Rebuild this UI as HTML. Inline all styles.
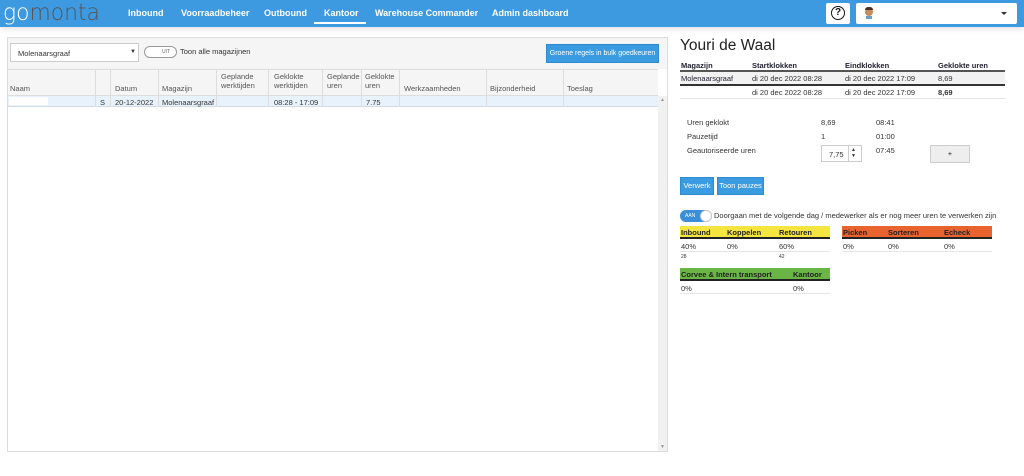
<!DOCTYPE html>
<html><head><meta charset="utf-8"><style>
*{box-sizing:border-box;margin:0;padding:0}
body{width:1024px;height:476px;overflow:hidden;background:#fff;font-family:"Liberation Sans",Arial,sans-serif;font-size:7.5px;color:#333;position:relative}
.a{position:absolute;white-space:nowrap}
.nav{left:0;top:0;width:1024px;height:27px;background:#3d9ae0;box-shadow:0 2px 6px rgba(0,0,0,.12)}
.nav .l{color:#fff;font-weight:bold;font-size:9px;top:8px}
.btn{background:#3a9be0;color:#fff;border:1px solid #2f8bd0}
.hd{font-size:7.5px;color:#555}
.vl{width:1px;background:#ddd;top:69px;height:38px}
</style></head><body>
<div class="a nav">
 <div class="a" style="left:3px;top:0px;font-size:23px;letter-spacing:0px;color:#fff;font-family:'DejaVu Sans',sans-serif;font-weight:200;transform:scaleX(0.95);transform-origin:left">go<span style="color:#555">monta</span></div>
 <div class="a l" style="left:128px">Inbound</div>
 <div class="a l" style="left:181px">Voorraadbeheer</div>
 <div class="a l" style="left:264px">Outbound</div>
 <div class="a l" style="left:324px">Kantoor</div>
 <div class="a" style="left:314px;top:22px;width:52px;height:2px;background:#fff"></div>
 <div class="a l" style="left:375px">Warehouse Commander</div>
 <div class="a l" style="left:492px">Admin dashboard</div>
 <div class="a" style="left:826px;top:3px;width:24px;height:21px;background:#fff;border-radius:2px"><div class="a" style="left:5px;top:3px;width:14px;height:14px;border:1.5px solid #111;border-radius:50%;font-size:10px;font-weight:bold;text-align:center;line-height:11px;color:#111">?</div></div>
 <div class="a" style="left:856px;top:3px;width:161px;height:21px;background:#fff;border-radius:2px">
  <div class="a" style="left:9px;top:5px;width:8px;height:8px;border-radius:50%;background:#c58b5c"></div>
  <div class="a" style="left:9px;top:4px;width:8px;height:3px;border-radius:4px 4px 0 0;background:#4a2f1e"></div>
  <div class="a" style="left:10px;top:13px;width:6px;height:3px;background:#6aa0c8"></div>
  <div class="a" style="left:145px;top:9px;width:0;height:0;border:3px solid transparent;border-top:3px solid #333"></div>
 </div>
</div>
<!-- left panel -->
<div class="a" style="left:7px;top:37px;width:661px;height:415px;border:1px solid #ddd;background:#fff"></div>
<div class="a" style="left:8px;top:38px;width:659px;height:31px;background:#f5f5f5"></div>
<div class="a" style="left:10px;top:43px;width:129px;height:19px;background:#fff;border:1px solid #ccc"><span class="a" style="left:7px;top:5px">Molenaarsgraaf</span><span class="a" style="left:119px;top:5px;font-size:6px">▼</span></div>
<div class="a" style="left:144px;top:46px;width:33px;height:12px;border:1px solid #999;border-radius:7px;background:#fff"><span class="a" style="left:17px;top:2px;font-size:5px;color:#666">UIT</span></div>
<div class="a" style="left:180px;top:47px">Toon alle magazijnen</div>
<div class="a btn" style="left:546px;top:44px;width:113px;height:19px;text-align:center;line-height:17px;color:#fff;font-size:7px">Groene regels in bulk goedkeuren</div>
<div class="a" style="left:8px;top:69px;width:650px;height:27px;background:#f5f5f5;border-top:1px solid #ddd;border-bottom:1px solid #ddd"></div>
<div class="a" style="left:8px;top:96px;width:650px;height:11px;background:#e8f2fc;border-bottom:1px solid #cfdce8"></div>
<div class="a" style="left:9px;top:97px;width:39px;height:8px;background:#fff"></div>
<div class="a vl" style="left:95px"></div><div class="a vl" style="left:110px"></div><div class="a vl" style="left:158px"></div><div class="a vl" style="left:216px"></div><div class="a vl" style="left:268px"></div><div class="a vl" style="left:322px"></div><div class="a vl" style="left:361px"></div><div class="a vl" style="left:399px"></div><div class="a vl" style="left:486px"></div><div class="a vl" style="left:563px"></div>
<div class="a hd" style="left:10px;top:84px">Naam</div>
<div class="a hd" style="left:115px;top:84px">Datum</div>
<div class="a hd" style="left:162px;top:84px">Magazijn</div>
<div class="a hd" style="left:221px;top:72px;line-height:9px">Geplande<br>werktijden</div>
<div class="a hd" style="left:274px;top:72px;line-height:9px">Geklokte<br>werktijden</div>
<div class="a hd" style="left:327px;top:72px;line-height:9px">Geplande<br>uren</div>
<div class="a hd" style="left:365px;top:72px;line-height:9px">Geklokte<br>uren</div>
<div class="a hd" style="left:404px;top:84px">Werkzaamheden</div>
<div class="a hd" style="left:490px;top:84px">Bijzonderheid</div>
<div class="a hd" style="left:567px;top:84px">Toeslag</div>
<div class="a" style="left:100px;top:98px">S</div>
<div class="a" style="left:115px;top:98px">20-12-2022</div>
<div class="a" style="left:162px;top:98px">Molenaarsgraaf</div>
<div class="a" style="left:274px;top:98px">08:28 - 17:09</div>
<div class="a" style="left:366px;top:98px">7.75</div>
<div class="a" style="left:658px;top:96px;width:9px;height:355px;background:#f1f1f1"><span class="a" style="left:2px;top:1px;font-size:5px;color:#999">▲</span><span class="a" style="left:2px;bottom:1px;font-size:5px;color:#999">▼</span></div>
<!-- right -->
<div class="a" style="left:680px;top:37px;font-size:15.5px;color:#222">Youri de Waal</div>
<div class="a" style="left:681px;top:61px;font-weight:bold;color:#223">Magazijn</div>
<div class="a" style="left:752px;top:61px;font-weight:bold;color:#223">Startklokken</div>
<div class="a" style="left:845px;top:61px;font-weight:bold;color:#223">Eindklokken</div>
<div class="a" style="left:938px;top:61px;font-weight:bold;color:#223">Geklokte uren</div>
<div class="a" style="left:680px;top:70px;width:325px;height:2px;background:#555"></div>
<div class="a" style="left:680px;top:72px;width:325px;height:12px;background:#f2f2f2"></div>
<div class="a" style="left:681px;top:74px;color:#223">Molenaarsgraaf</div>
<div class="a" style="left:752px;top:74px">di 20 dec 2022 08:28</div>
<div class="a" style="left:845px;top:74px">di 20 dec 2022 17:09</div>
<div class="a" style="left:938px;top:74px">8,69</div>
<div class="a" style="left:680px;top:84px;width:325px;height:2px;background:#333"></div>
<div class="a" style="left:752px;top:88px">di 20 dec 2022 08:28</div>
<div class="a" style="left:845px;top:88px">di 20 dec 2022 17:09</div>
<div class="a" style="left:938px;top:88px;font-weight:bold">8,69</div>
<div class="a" style="left:680px;top:98px;width:325px;height:1px;background:#e5e5e5"></div>
<div class="a" style="left:687px;top:118px">Uren geklokt</div><div class="a" style="left:821px;top:118px">8,69</div><div class="a" style="left:876px;top:118px">08:41</div>
<div class="a" style="left:687px;top:132px">Pauzetijd</div><div class="a" style="left:821px;top:132px">1</div><div class="a" style="left:876px;top:132px">01:00</div>
<div class="a" style="left:687px;top:146px">Geautoriseerde uren</div>
<div class="a" style="left:821px;top:145px;width:41px;height:17px;border:1px solid #ccc;background:#fff"><span class="a" style="left:7px;top:4px">7,75</span><div class="a" style="left:26px;top:0;width:1px;height:15px;background:#ccc"></div><span class="a" style="left:29px;top:1px;font-size:5px;line-height:6px">▲<br>▼</span></div>
<div class="a" style="left:876px;top:146px">07:45</div>
<div class="a" style="left:930px;top:145px;width:40px;height:18px;background:#eee;border:1px solid #ccc;text-align:center;line-height:16px">+</div>
<div class="a btn" style="left:680px;top:177px;width:34px;height:18px;text-align:center;line-height:16px">Verwerk</div>
<div class="a btn" style="left:717px;top:177px;width:47px;height:18px;text-align:center;line-height:16px">Toon pauzes</div>
<div class="a" style="left:680px;top:210px;width:32px;height:12px;border-radius:7px;background:#3a8fd8"><span class="a" style="left:5px;top:3px;font-size:5px;color:#fff">AAN</span><div class="a" style="left:20px;top:0;width:12px;height:12px;border-radius:50%;background:#fff;border:1px solid #ccc"></div></div>
<div class="a" style="left:714px;top:211px">Doorgaan met de volgende dag / medewerker als er nog meer uren te verwerken zijn</div>
<div class="a" style="left:680px;top:226px;width:150px;height:13px;background:#f5e541;border-bottom:2px solid #222"></div>
<div class="a" style="left:681px;top:228px;font-weight:bold;color:#222">Inbound</div><div class="a" style="left:727px;top:228px;font-weight:bold;color:#222">Koppelen</div><div class="a" style="left:779px;top:228px;font-weight:bold;color:#222">Retouren</div>
<div class="a" style="left:681px;top:242px">40%</div><div class="a" style="left:727px;top:242px">0%</div><div class="a" style="left:779px;top:242px">60%</div>
<div class="a" style="left:680px;top:251px;width:150px;height:1px;background:#e5e5e5"></div>
<div class="a" style="left:681px;top:254px;font-size:5px">28</div><div class="a" style="left:779px;top:254px;font-size:5px">42</div>
<div class="a" style="left:842px;top:226px;width:150px;height:13px;background:#e8632e;border-bottom:2px solid #222"></div>
<div class="a" style="left:843px;top:228px;font-weight:bold;color:#222">Picken</div><div class="a" style="left:888px;top:228px;font-weight:bold;color:#222">Sorteren</div><div class="a" style="left:944px;top:228px;font-weight:bold;color:#222">Echeck</div>
<div class="a" style="left:843px;top:242px">0%</div><div class="a" style="left:888px;top:242px">0%</div><div class="a" style="left:944px;top:242px">0%</div>
<div class="a" style="left:842px;top:251px;width:150px;height:1px;background:#e5e5e5"></div>
<div class="a" style="left:680px;top:268px;width:150px;height:13px;background:#6ab545;border-bottom:2px solid #222"></div>
<div class="a" style="left:681px;top:270px;font-weight:bold;color:#222">Corvee &amp; Intern transport</div><div class="a" style="left:793px;top:270px;font-weight:bold;color:#222">Kantoor</div>
<div class="a" style="left:681px;top:284px">0%</div><div class="a" style="left:793px;top:284px">0%</div>
<div class="a" style="left:680px;top:293px;width:150px;height:1px;background:#e5e5e5"></div>
</body></html>
